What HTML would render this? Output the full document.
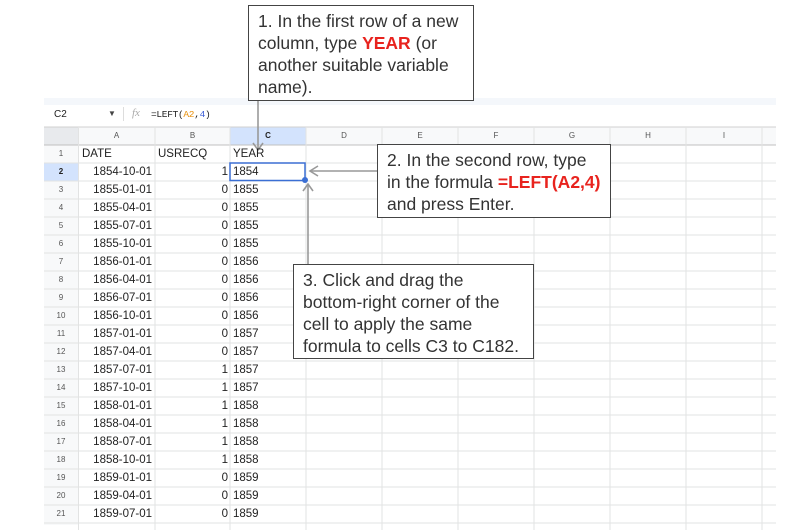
<!DOCTYPE html>
<html><head><meta charset="utf-8"><style>
*{margin:0;padding:0;box-sizing:border-box}
body{width:810px;height:530px;background:#fff;position:relative;overflow:hidden;font-family:"Liberation Sans",Arial,sans-serif}
.abs{position:absolute}
.cell{position:absolute;font-size:11.5px;color:#222;line-height:18px;white-space:nowrap}
.rh{position:absolute;left:44px;width:34px;text-align:center;font-size:8px;color:#555;line-height:18px}
.ch{position:absolute;top:127px;height:18px;text-align:center;font-size:8px;color:#555;line-height:18px}
.box{position:absolute;border:1.5px solid #444;background:#fff;font-size:17.5px;line-height:22px;color:#333;padding:4px 9px}
.red{color:#e8231e;font-weight:bold}
</style></head><body>
<div class="abs" style="left:44px;top:98px;width:732px;height:7px;background:#f4f7fb"></div>
<div class="abs" style="left:54px;top:109px;font-size:10px;color:#222">C2</div>
<div class="abs" style="left:108px;top:109px;font-size:8px;color:#444">▼</div>
<div class="abs" style="left:123px;top:107px;width:1px;height:14px;background:#ddd"></div>
<div class="abs" style="left:132px;top:107px;font-size:11px;color:#aaa;font-style:italic;font-family:'Liberation Serif',serif">fx</div>
<div class="abs" style="left:151px;top:109px;font-size:9.5px;color:#222;font-family:'Liberation Mono',monospace;letter-spacing:-0.3px">=LEFT(<span style="color:#e8900c">A2</span>,<span style="color:#3d5ed6">4</span>)</div>
<svg class="abs" style="left:0;top:0" width="810" height="530">
<rect x="44" y="127" width="732" height="18" fill="#f8f9fa"/>
<rect x="44" y="127" width="34" height="18" fill="#e8eaed"/>
<rect x="230" y="127" width="76" height="18" fill="#d3e3fd"/>
<rect x="44" y="145" width="34" height="380" fill="#f8f9fa"/>
<rect x="44" y="163" width="34" height="18" fill="#d3e3fd"/>
<line x1="44" y1="127" x2="776" y2="127" stroke="#d0d0d0"/>
<line x1="44" y1="145" x2="776" y2="145" stroke="#c0c0c0"/>
<g stroke="#e2e3e3">
<line x1="44" y1="163" x2="776" y2="163"/><line x1="44" y1="181" x2="776" y2="181"/><line x1="44" y1="199" x2="776" y2="199"/><line x1="44" y1="217" x2="776" y2="217"/><line x1="44" y1="235" x2="776" y2="235"/><line x1="44" y1="253" x2="776" y2="253"/><line x1="44" y1="271" x2="776" y2="271"/><line x1="44" y1="289" x2="776" y2="289"/><line x1="44" y1="307" x2="776" y2="307"/><line x1="44" y1="325" x2="776" y2="325"/><line x1="44" y1="343" x2="776" y2="343"/><line x1="44" y1="361" x2="776" y2="361"/><line x1="44" y1="379" x2="776" y2="379"/><line x1="44" y1="397" x2="776" y2="397"/><line x1="44" y1="415" x2="776" y2="415"/><line x1="44" y1="433" x2="776" y2="433"/><line x1="44" y1="451" x2="776" y2="451"/><line x1="44" y1="469" x2="776" y2="469"/><line x1="44" y1="487" x2="776" y2="487"/><line x1="44" y1="505" x2="776" y2="505"/><line x1="44" y1="523" x2="776" y2="523"/>
<line x1="78.5" y1="127" x2="78.5" y2="530"/><line x1="155" y1="127" x2="155" y2="530"/><line x1="230" y1="127" x2="230" y2="530"/><line x1="306" y1="127" x2="306" y2="530"/><line x1="382" y1="127" x2="382" y2="530"/><line x1="458" y1="127" x2="458" y2="530"/><line x1="534" y1="127" x2="534" y2="530"/><line x1="610" y1="127" x2="610" y2="530"/><line x1="686" y1="127" x2="686" y2="530"/><line x1="762" y1="127" x2="762" y2="530"/>
</g>
<rect x="230" y="163" width="75" height="17.5" fill="none" stroke="#3b6fd4" stroke-width="1.5"/>
<circle cx="305" cy="180" r="3" fill="#3b6fd4"/>
<g stroke="#999" stroke-width="1.6" fill="none">
<line x1="258" y1="101" x2="258" y2="150"/><polyline points="253,143 258,150 263,143"/>
<line x1="377" y1="171" x2="310" y2="171"/><polyline points="318,166 310,171 318,176"/>
<line x1="308" y1="264" x2="308" y2="184"/><polyline points="303,191 308,184 313,191"/>
</g>
</svg>
<div class="ch" style="left:78px;width:77px">A</div><div class="ch" style="left:155px;width:75px">B</div><div class="ch" style="left:230px;width:76px;font-weight:bold;color:#222">C</div><div class="ch" style="left:306px;width:76px">D</div><div class="ch" style="left:382px;width:76px">E</div><div class="ch" style="left:458px;width:76px">F</div><div class="ch" style="left:534px;width:76px">G</div><div class="ch" style="left:610px;width:76px">H</div><div class="ch" style="left:686px;width:76px">I</div>
<div class="rh" style="top:145px">1</div><div class="rh" style="top:163px;font-weight:bold;color:#222">2</div><div class="rh" style="top:181px">3</div><div class="rh" style="top:199px">4</div><div class="rh" style="top:217px">5</div><div class="rh" style="top:235px">6</div><div class="rh" style="top:253px">7</div><div class="rh" style="top:271px">8</div><div class="rh" style="top:289px">9</div><div class="rh" style="top:307px">10</div><div class="rh" style="top:325px">11</div><div class="rh" style="top:343px">12</div><div class="rh" style="top:361px">13</div><div class="rh" style="top:379px">14</div><div class="rh" style="top:397px">15</div><div class="rh" style="top:415px">16</div><div class="rh" style="top:433px">17</div><div class="rh" style="top:451px">18</div><div class="rh" style="top:469px">19</div><div class="rh" style="top:487px">20</div><div class="rh" style="top:505px">21</div>
<div class="cell" style="left:82px;top:145px">DATE</div><div class="cell" style="left:158px;top:145px">USRECQ</div><div class="cell" style="left:233px;top:145px">YEAR</div>
<div class="cell" style="right:658px;top:163px">1854-10-01</div><div class="cell" style="right:582px;top:163px">1</div><div class="cell" style="left:233px;top:163px">1854</div>
<div class="cell" style="right:658px;top:181px">1855-01-01</div><div class="cell" style="right:582px;top:181px">0</div><div class="cell" style="left:233px;top:181px">1855</div>
<div class="cell" style="right:658px;top:199px">1855-04-01</div><div class="cell" style="right:582px;top:199px">0</div><div class="cell" style="left:233px;top:199px">1855</div>
<div class="cell" style="right:658px;top:217px">1855-07-01</div><div class="cell" style="right:582px;top:217px">0</div><div class="cell" style="left:233px;top:217px">1855</div>
<div class="cell" style="right:658px;top:235px">1855-10-01</div><div class="cell" style="right:582px;top:235px">0</div><div class="cell" style="left:233px;top:235px">1855</div>
<div class="cell" style="right:658px;top:253px">1856-01-01</div><div class="cell" style="right:582px;top:253px">0</div><div class="cell" style="left:233px;top:253px">1856</div>
<div class="cell" style="right:658px;top:271px">1856-04-01</div><div class="cell" style="right:582px;top:271px">0</div><div class="cell" style="left:233px;top:271px">1856</div>
<div class="cell" style="right:658px;top:289px">1856-07-01</div><div class="cell" style="right:582px;top:289px">0</div><div class="cell" style="left:233px;top:289px">1856</div>
<div class="cell" style="right:658px;top:307px">1856-10-01</div><div class="cell" style="right:582px;top:307px">0</div><div class="cell" style="left:233px;top:307px">1856</div>
<div class="cell" style="right:658px;top:325px">1857-01-01</div><div class="cell" style="right:582px;top:325px">0</div><div class="cell" style="left:233px;top:325px">1857</div>
<div class="cell" style="right:658px;top:343px">1857-04-01</div><div class="cell" style="right:582px;top:343px">0</div><div class="cell" style="left:233px;top:343px">1857</div>
<div class="cell" style="right:658px;top:361px">1857-07-01</div><div class="cell" style="right:582px;top:361px">1</div><div class="cell" style="left:233px;top:361px">1857</div>
<div class="cell" style="right:658px;top:379px">1857-10-01</div><div class="cell" style="right:582px;top:379px">1</div><div class="cell" style="left:233px;top:379px">1857</div>
<div class="cell" style="right:658px;top:397px">1858-01-01</div><div class="cell" style="right:582px;top:397px">1</div><div class="cell" style="left:233px;top:397px">1858</div>
<div class="cell" style="right:658px;top:415px">1858-04-01</div><div class="cell" style="right:582px;top:415px">1</div><div class="cell" style="left:233px;top:415px">1858</div>
<div class="cell" style="right:658px;top:433px">1858-07-01</div><div class="cell" style="right:582px;top:433px">1</div><div class="cell" style="left:233px;top:433px">1858</div>
<div class="cell" style="right:658px;top:451px">1858-10-01</div><div class="cell" style="right:582px;top:451px">1</div><div class="cell" style="left:233px;top:451px">1858</div>
<div class="cell" style="right:658px;top:469px">1859-01-01</div><div class="cell" style="right:582px;top:469px">0</div><div class="cell" style="left:233px;top:469px">1859</div>
<div class="cell" style="right:658px;top:487px">1859-04-01</div><div class="cell" style="right:582px;top:487px">0</div><div class="cell" style="left:233px;top:487px">1859</div>
<div class="cell" style="right:658px;top:505px">1859-07-01</div><div class="cell" style="right:582px;top:505px">0</div><div class="cell" style="left:233px;top:505px">1859</div>
<div class="box" style="left:248px;top:5px;width:226px;height:96px">1. In the first row of a new column, type <span class="red">YEAR</span> (or another suitable variable name).</div>
<div class="box" style="left:377px;top:144px;width:234px;height:74px">2. In the second row, type in the formula <span class="red">=LEFT(A2,4)</span> and press Enter.</div>
<div class="box" style="left:293px;top:264px;width:241px;height:95px">3. Click and drag the bottom-right corner of the cell to apply the same formula to cells C3 to C182.</div>
</body></html>
